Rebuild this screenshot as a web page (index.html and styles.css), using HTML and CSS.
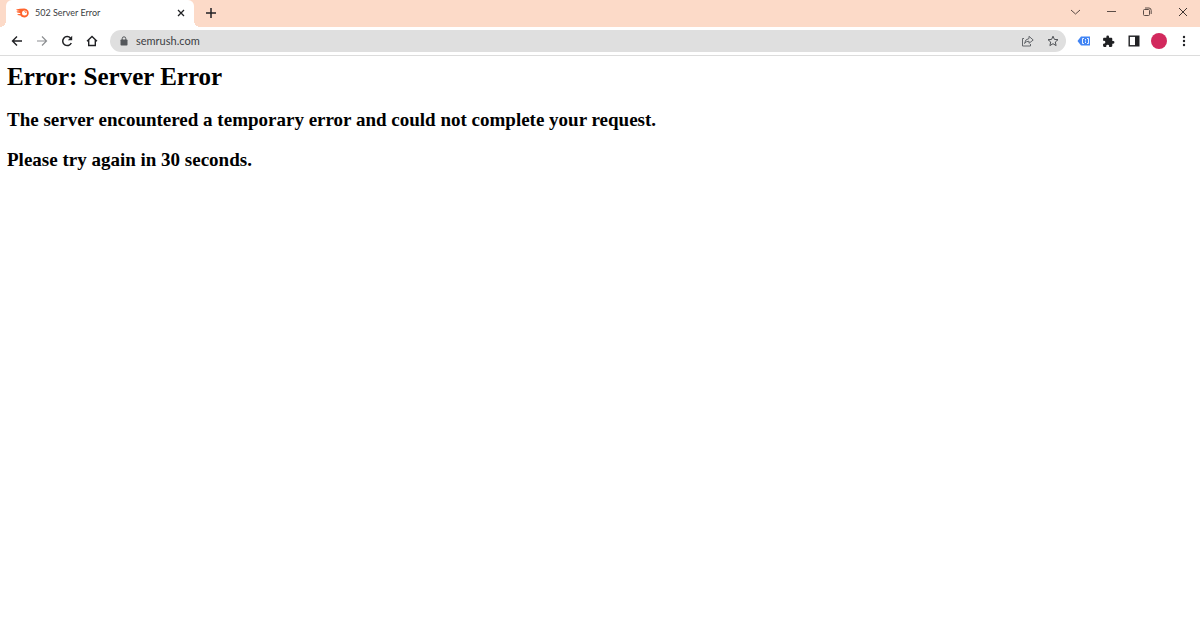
FILE: index.html
```html
<!DOCTYPE html>
<html lang="en">
<head>
<meta charset="UTF-8">
<meta name="viewport" content="width=device-width, initial-scale=1.0">
<title>502 Server Error</title>
<link rel="stylesheet" href="styles.css">
</head>
<body>
  <header class="browser">
    <div class="tab-strip">
      <div class="tab">
        <svg class="favicon" width="13" height="10" viewBox="0 0 26 20">
          <path fill="#ff642d" d="M0 3 Q8 1 16 1 A9 9 0 1 1 9 15 L3 14 Q2 12 6 12 L9 12 L8 10 Q1 9 1 7 Q4 6 8 6 Q1 5 0 3Z"/>
          <circle cx="17" cy="10" r="5" fill="#fff"/>
          <path d="M17 7 A3 3 0 0 1 20 10" fill="none" stroke="#ff642d" stroke-width="2"/>
        </svg>
        <span class="tab-title">502 Server Error</span>
        <button class="tab-close" aria-label="Close tab">
          <svg width="8" height="8" viewBox="0 0 8 8"><path d="M1 1L7 7M7 1L1 7" stroke="#202124" stroke-width="1.3"/></svg>
        </button>
      </div>
      <button class="new-tab" aria-label="New tab">
        <svg width="10" height="10" viewBox="0 0 10 10"><path d="M5 0V10M0 5H10" stroke="#202124" stroke-width="1.5"/></svg>
      </button>
      <div class="window-buttons">
        <button aria-label="Search tabs">
          <svg width="12" height="12" viewBox="0 0 12 12"><path d="M3 4L7.500 8L12 4" fill="none" stroke="#594a44"/></svg>
        </button>
        <button aria-label="Minimize">
          <svg width="12" height="12" viewBox="0 0 12 12"><path d="M3 5.500H12" stroke="#5c4d47"/></svg>
        </button>
        <button aria-label="Restore">
          <svg width="12" height="12" viewBox="0 0 12 12" fill="none" stroke="#5c4d47"><rect x="3.500" y="3.500" width="6" height="6" rx="1"/><path d="M5 2H9Q11.200 2 11.200 4.500V8"/></svg>
        </button>
        <button aria-label="Close window">
          <svg width="12" height="12" viewBox="0 0 12 12"><path d="M3 2L11 10M11 2L3 10" stroke="#3f3531"/></svg>
        </button>
      </div>
    </div>

    <div class="toolbar">
      <div class="nav-buttons">
        <button aria-label="Back">
          <svg width="12" height="12" viewBox="0 0 12 12" fill="none" stroke="#202124" stroke-width="1.4"><path d="M11 6H1.500M6 1.500L1.500 6L6 10.500"/></svg>
        </button>
        <button aria-label="Forward">
          <svg width="12" height="12" viewBox="0 0 12 12" fill="none" stroke="#8c8e91" stroke-width="1.200"><path d="M1 6H10.500M6 1.500L10.500 6L6 10.500"/></svg>
        </button>
        <button aria-label="Reload">
          <svg width="12" height="12" viewBox="0 0 12 12"><path d="M10.300 8A4.500 4.500 0 1 1 9.500 3" fill="none" stroke="#202124" stroke-width="1.500"/><path d="M11.200 0.800V5.200H6.800Z" fill="#202124"/></svg>
        </button>
        <button aria-label="Home">
          <svg width="12" height="12" viewBox="0 0 12 12"><path d="M1 6.200L6 1.500L11 6.200M2.700 5V10.500H9.300V5" fill="none" stroke="#202124" stroke-width="1.400"/></svg>
        </button>
      </div>
      <div class="address-bar">
        <svg class="lock" width="8" height="10" viewBox="0 0 8 10"><rect x="0.500" y="3.500" width="7" height="6" rx="0.800" fill="#54575b"/><path d="M2.200 4V2.600A1.800 1.800 0 0 1 5.800 2.600V4" fill="none" stroke="#54575b"/></svg>
        <input class="url" type="text" value="semrush.com" aria-label="Address">
        <button aria-label="Share">
          <svg width="13" height="12" viewBox="0 0 13 12" fill="none" stroke="#64676b"><path d="M3 3.500H1.500V11H9.500V9"/><path d="M3.500 8.500Q4 4 8 3.500V1.300L12.200 5L8 8.300V6.200Q5 6.200 3.500 8.500Z" stroke-linejoin="round"/></svg>
        </button>
        <button aria-label="Bookmark this page">
          <svg width="12" height="12" viewBox="0 0 12 12"><path d="M6 1.200L7.400 4.400L11 4.700L8.300 7L9.100 10.600L6 8.700L2.900 10.600L3.700 7L1 4.700L4.600 4.400Z" fill="none" stroke="#4d5054" stroke-linejoin="round"/></svg>
        </button>
      </div>
      <div class="extensions">
        <button aria-label="Tag extension">
          <svg width="14" height="12" viewBox="0 0 14 12"><path d="M0.500 6L4 1.500H13V10.500H4Z" fill="#4285f4"/><path d="M7 3.500H5.500V8.500H7M10 3.500H11.500V8.500H10M8.500 4V5.500M8.500 6.500V8" fill="none" stroke="#fff" stroke-width="0.900"/></svg>
        </button>
        <button aria-label="Extensions">
          <svg width="13" height="13" viewBox="0 0 24 24"><path fill="#202124" d="M20.500 11H19V7c0-1.100-.9-2-2-2h-4V3.500a2.500 2.500 0 0 0-5 0V5H4c-1.100 0-2 .9-2 2v3.800h1.500a2.700 2.700 0 0 1 0 5.400H2V20c0 1.100.9 2 2 2h3.800v-1.500a2.700 2.700 0 0 1 5.400 0V22H17c1.100 0 2-.9 2-2v-4h1.500a2.500 2.500 0 0 0 0-5z"/></svg>
        </button>
        <button aria-label="Side panel">
          <svg width="12" height="12" viewBox="0 0 12 12"><rect x="1.200" y="1.200" width="9.600" height="9.600" fill="#fff" stroke="#202124" stroke-width="1.400"/><rect x="7" y="1" width="4" height="10" fill="#202124"/></svg>
        </button>
        <button aria-label="Profile"><span class="avatar"></span></button>
        <button aria-label="Menu">
          <svg width="12" height="12" viewBox="0 0 12 12" fill="#202124"><circle cx="6" cy="2" r="1.200"/><circle cx="6" cy="6" r="1.200"/><circle cx="6" cy="10" r="1.200"/></svg>
        </button>
      </div>
    </div>
  </header>

  <main class="page">
    <h1>Error: Server Error</h1>
    <h2>The server encountered a temporary error and could not complete your request.</h2>
    <h2>Please try again in 30 seconds.</h2>
  </main>
</body>
</html>
```

FILE: styles.css
```css
* {
  box-sizing: border-box;
}
body {
  margin: 0;
  background-color: #fff;
  color: #000;
}
button {
  display: flex;
  align-items: center;
  justify-content: center;
  padding: 0;
  border: none;
  background: none;
  cursor: pointer;
}
.browser {
  font-family: Lato, "Open Sans", sans-serif;
  border-bottom: 1px solid #dcdcdc;
}
.tab-strip {
  display: flex;
  height: 27px;
  padding-left: 6px;
  background-color: #fcdac8;
}
.tab {
  position: relative;
  display: flex;
  align-items: center;
  width: 188px;
  padding: 0 4px 2px 10px;
  border-radius: 6px 6px 0 0;
  background-color: #fff;
}
/* curved feet on both sides of the active tab */
.tab::before,
.tab::after {
  content: "";
  position: absolute;
  bottom: 0;
  width: 6px;
  height: 6px;
}
.tab::before {
  right: 100%;
  background: radial-gradient(circle at 0 0, #fcdac8 6px, #fff 6px);
}
.tab::after {
  left: 100%;
  background: radial-gradient(circle at 100% 0, #fcdac8 6px, #fff 6px);
}
.tab-title {
  flex: 1;
  margin-left: 6px;
  font-size: 9px;
  line-height: 12px;
  color: #3c4043;
}
.tab-close {
  width: 18px;
  height: 18px;
}
.new-tab {
  width: 22px;
  margin-left: 6px;
  padding-bottom: 2px;
}
.window-buttons {
  display: flex;
  margin-left: auto;
  padding-bottom: 3px;
}
.window-buttons button {
  width: 36px;
}
.toolbar {
  display: flex;
  align-items: center;
  height: 28px;
  padding: 0 4px;
}
.nav-buttons,
.extensions {
  display: flex;
}
.toolbar button {
  width: 25px;
  height: 22px;
}
.address-bar {
  display: flex;
  flex: 1;
  align-items: center;
  height: 22px;
  margin: 0 5px 0 6px;
  padding: 0 1px 0 10px;
  border-radius: 11px;
  background-color: #dfdfdf;
}
.url {
  flex: 1;
  margin-left: 8px;
  padding: 0;
  border: none;
  outline: none;
  background: none;
  font-family: inherit;
  font-size: 11px;
  line-height: 16px;
  color: #3c4043;
}
.avatar {
  width: 16px;
  height: 16px;
  border-radius: 50%;
  background-color: #d2295d;
}
.page {
  padding: 6px 7px;
  font-family: "Liberation Serif", "Times New Roman", serif;
}
h1 {
  margin: 0 0 16px;
  font-size: 25px;
  line-height: 30px;
}
h2 {
  margin: 0 0 16px;
  font-size: 19px;
  line-height: 24px;
}
```
